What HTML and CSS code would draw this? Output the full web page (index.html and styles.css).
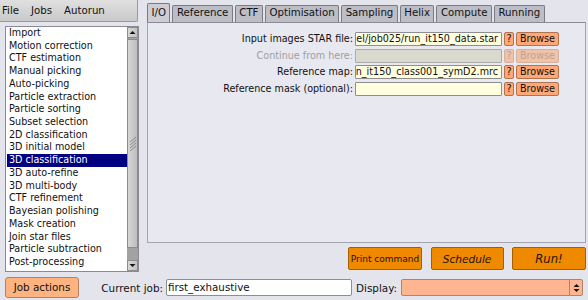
FILE: index.html
```html
<!DOCTYPE html>
<html lang="en">
<head>
  <meta charset="UTF-8" />
  <title>RELION</title>
  <link rel="stylesheet" href="styles.css">
</head>
<body>
<div class="app">
  <div class="top">
    <div class="side">
      <div class="menubar"><span>File</span><span>Jobs</span><span>Autorun</span></div>
      <div class="browser">
        <ul class="joblist">
          <li>Import</li>
          <li>Motion correction</li>
          <li>CTF estimation</li>
          <li>Manual picking</li>
          <li>Auto-picking</li>
          <li>Particle extraction</li>
          <li>Particle sorting</li>
          <li>Subset selection</li>
          <li>2D classification</li>
          <li>3D initial model</li>
          <li class="sel">3D classification</li>
          <li>3D auto-refine</li>
          <li>3D multi-body</li>
          <li>CTF refinement</li>
          <li>Bayesian polishing</li>
          <li>Mask creation</li>
          <li>Join star files</li>
          <li>Particle subtraction</li>
          <li>Post-processing</li>
        </ul>
        <div class="scrollbar">
          <div class="arrow">
            <svg width="7" height="5" viewBox="0 0 7 5"><polygon points="0.5,4 3.5,1 6.5,4" fill="#111"/></svg>
          </div>
          <div class="thumb">
            <svg width="8" height="16" viewBox="0 0 8 16">
              <g stroke="#8a8a8a" stroke-width="1">
                <line x1="1" y1="6" x2="7" y2="1"/>
                <line x1="1" y1="9" x2="7" y2="4"/>
                <line x1="1" y1="12" x2="7" y2="7"/>
                <line x1="1" y1="15" x2="7" y2="10"/>
              </g>
            </svg>
          </div>
          <div class="track"></div>
          <div class="arrow">
            <svg width="7" height="5" viewBox="0 0 7 5"><polygon points="0.5,1 3.5,4 6.5,1" fill="#111"/></svg>
          </div>
        </div>
      </div>
    </div>

    <div class="main">
      <div class="tabs">
        <div class="tab active">I/O</div>
        <div class="tab">Reference</div>
        <div class="tab">CTF</div>
        <div class="tab">Optimisation</div>
        <div class="tab">Sampling</div>
        <div class="tab">Helix</div>
        <div class="tab">Compute</div>
        <div class="tab">Running</div>
      </div>
      <div class="panel">
        <div class="form">
          <div class="lbl">Input images STAR file:</div>
          <div class="field"><span>el/job025/run_it150_data.star</span></div>
          <div class="help">?</div>
          <div class="browse">Browse</div>

          <div class="lbl off">Continue from here:</div>
          <div class="field off"></div>
          <div class="help off">?</div>
          <div class="browse off">Browse</div>

          <div class="lbl">Reference map:</div>
          <div class="field"><span>n_it150_class001_symD2.mrc</span></div>
          <div class="help">?</div>
          <div class="browse">Browse</div>

          <div class="lbl">Reference mask (optional):</div>
          <div class="field"></div>
          <div class="help">?</div>
          <div class="browse">Browse</div>
        </div>
      </div>
      <div class="actions">
        <div class="go print">Print command</div>
        <div class="go sched">Schedule</div>
        <div class="go run">Run!</div>
      </div>
    </div>
  </div>

  <div class="bottom">
    <div class="jobact">Job actions</div>
    <div class="cur">Current job:</div>
    <div class="jobname">first_exhaustive</div>
    <div class="disp">Display:</div>
    <div class="choice">
      <div class="spin">
        <svg width="7" height="10" viewBox="0 0 7 10"><polygon points="0.5,4 3.5,1 6.5,4" fill="#111"/><polygon points="0.5,6 3.5,9 6.5,6" fill="#111"/></svg>
      </div>
    </div>
  </div>
</div>
</body>
</html>
```

FILE: styles.css
```css
body {
  margin: 0;
  background: #e4e4ec;
  font-family: "DejaVu Sans", sans-serif;
  color: #111;
}
.app {
  width: 588px;
  height: 300px;
  overflow: hidden;
}
.top {
  display: flex;
  height: 277px;
}
.side {
  width: 140px;
  flex: none;
}
.menubar {
  width: 138px;
  height: 22px;
  box-sizing: border-box;
  display: flex;
  align-items: center;
  gap: 12px;
  padding-left: 2px;
  font-size: 10.2px;
  background: linear-gradient(#e0e0e0, #c9c9c9);
  border: 1px solid #9a9a9a;
  border-top: none;
  border-left: none;
  border-radius: 0 0 2px 0;
}
.browser {
  margin: 4px 0 0 5px;
  width: 134px;
  height: 246px;
  box-sizing: border-box;
  border: 1px solid #8a8a94;
  background: #fff;
  display: flex;
}
.joblist {
  flex: 1;
  margin: 0;
  padding: 0 0 0 1px;
  list-style: none;
  font-size: 9.6px;
  overflow: hidden;
}
.joblist li {
  height: 12.72px;
  line-height: 12.72px;
  padding-left: 2px;
  white-space: nowrap;
}
.joblist li.sel {
  background: #000080;
  color: #fff;
}
.scrollbar {
  width: 11px;
  flex: none;
  display: flex;
  flex-direction: column;
  background: #a2a2a2;
}
.arrow {
  height: 11px;
  flex: none;
  box-sizing: border-box;
  background: linear-gradient(90deg, #d8d8d8, #c2c2c2);
  border: 1px solid #8c8c8c;
  display: flex;
  align-items: center;
  justify-content: center;
}
.thumb {
  height: 209px;
  margin-top: 1px;
  flex: none;
  box-sizing: border-box;
  background: linear-gradient(90deg, #d6d6d6, #bdbdbd);
  border: 1px solid #8c8c8c;
  display: flex;
  align-items: center;
  justify-content: center;
}
.track {
  flex: 1;
}

.main {
  width: 439px;
  margin-left: 7px;
}
.tabs {
  height: 22px;
  display: flex;
  align-items: flex-end;
  gap: 2px;
  font-size: 10.2px;
}
.tab {
  height: 17px;
  line-height: 13px;
  padding: 0 3.5px;
  box-sizing: border-box;
  background: #bdbdc6;
  border: 1px solid #7a7a84;
  border-bottom: none;
  border-radius: 2px 2px 0 0;
  white-space: nowrap;
}
.tab.active {
  height: 19px;
  padding-top: 2px;
  background: #cdcdd5;
}
.panel {
  height: 221px;
  box-sizing: border-box;
  border: 1px solid #a4a4ae;
  border-top-color: #8a8a94;
  background: #e8e8f0;
  padding-top: 9px;
}
.form {
  display: grid;
  grid-template-columns: 205px 147px 10px 43px;
  grid-auto-rows: 14px;
  column-gap: 2px;
  row-gap: 2.5px;
  font-size: 9.6px;
}
.lbl {
  text-align: right;
  line-height: 14px;
  white-space: nowrap;
}
.lbl.off {
  color: #9e9ea4;
}
.field {
  box-sizing: border-box;
  background: #ffffe0;
  border: 1px solid #8e8e8e;
  border-radius: 1px;
  display: flex;
  justify-content: flex-end;
  overflow: hidden;
  white-space: nowrap;
  line-height: 12px;
  padding-right: 3px;
}
.field.off {
  background: #d9d9cd;
  border-color: #ababab;
}
.help, .browse {
  box-sizing: border-box;
  background: #ffa877;
  border: 1px solid #b3714c;
  border-radius: 2px;
  text-align: center;
  line-height: 12px;
}
.help.off, .browse.off {
  background: #efc3ab;
  border-color: #d5b09c;
  color: #c4a08c;
}
.actions {
  display: flex;
  justify-content: flex-end;
  gap: 8.5px;
  margin-top: 4px;
}
.go {
  width: 74px;
  height: 23px;
  box-sizing: border-box;
  background: #ef8900;
  border: 1px solid #a65f00;
  border-radius: 2px;
  display: flex;
  align-items: center;
  justify-content: center;
  color: #241200;
  white-space: nowrap;
}
.print {
  font-size: 9px;
}
.sched {
  width: 73px;
  font-style: italic;
  font-size: 10.6px;
}
.run {
  font-style: italic;
  font-size: 11.6px;
}

.bottom {
  display: flex;
  align-items: center;
  height: 21px;
  font-size: 10.4px;
}
.jobact {
  margin-left: 5px;
  width: 74px;
  height: 21px;
  box-sizing: border-box;
  background: #ffb380;
  border: 1px solid #b4825e;
  border-radius: 3px;
  line-height: 19px;
  text-align: center;
}
.cur {
  width: 84px;
  text-align: right;
  margin-right: 3px;
}
.jobname {
  width: 186px;
  height: 17px;
  box-sizing: border-box;
  background: #fff;
  border: 1px solid #8e8e8e;
  border-radius: 2px;
  padding-left: 1px;
  line-height: 15px;
  font-size: 10.3px;
}
.disp {
  width: 49px;
  box-sizing: border-box;
  padding-left: 4px;
}
.choice {
  width: 182px;
  height: 17px;
  box-sizing: border-box;
  background: #ffb58f;
  border: 1px solid #a8866f;
  border-radius: 2px;
  display: flex;
  justify-content: flex-end;
}
.spin {
  width: 12px;
  border-left: 1px solid #a8866f;
  display: flex;
  align-items: center;
  justify-content: center;
}
```
